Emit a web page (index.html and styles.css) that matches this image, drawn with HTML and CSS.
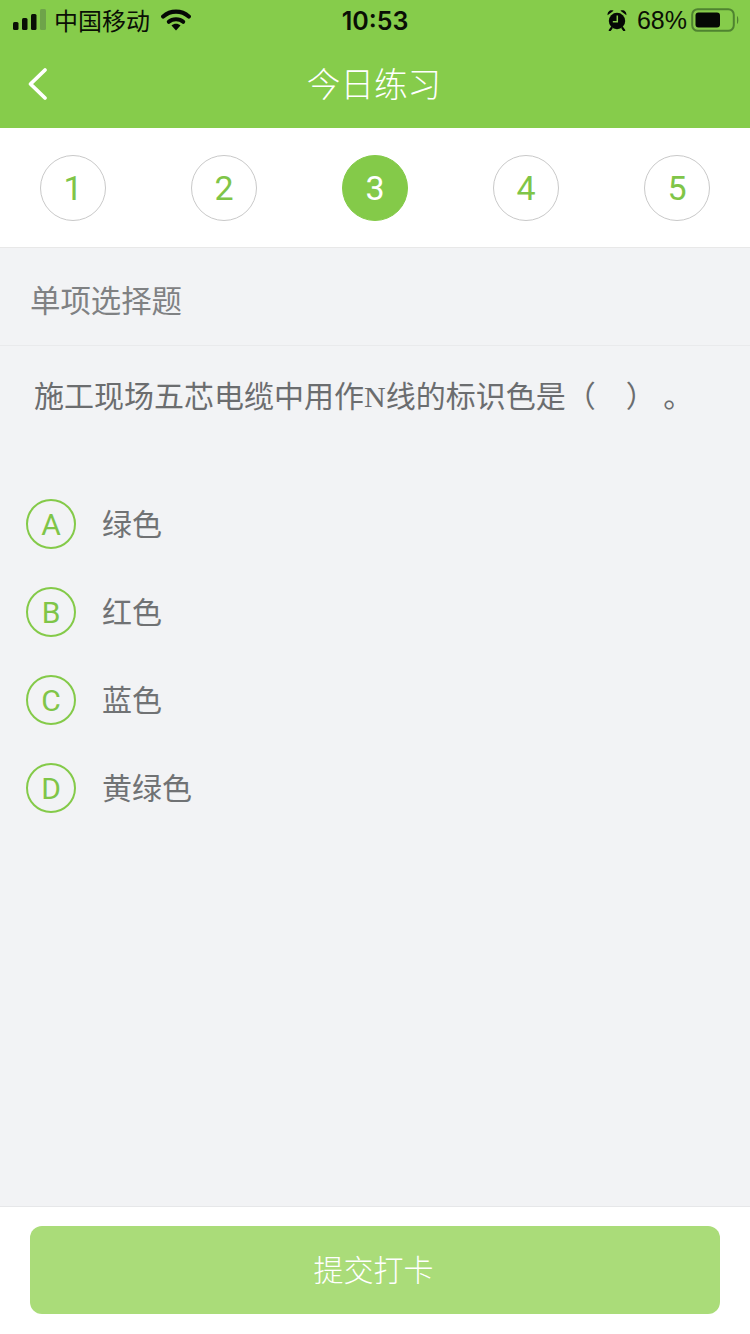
FILE: index.html
```html
<!DOCTYPE html>
<html lang="zh">
<head>
<meta charset="utf-8">
<title>今日练习</title>
<link rel="stylesheet" href="styles.css">
</head>
<body>
<div class="page">
  <header class="head">
    <div class="status">
      <div class="status-side">
        <svg class="signal" width="35" height="22" viewBox="0 0 35 22"><rect x="1" y="13" width="5.500" height="8" rx="1.500" fill="#0a0f05"/><rect x="10" y="9" width="5.500" height="12" rx="1.500" fill="#0a0f05"/><rect x="19" y="5" width="5.500" height="16" rx="1.500" fill="#0a0f05"/><rect x="28" y="0" width="6" height="21" rx="1.500" fill="#6ea34a"/></svg>
        <span class="carrier">中国移动</span>
        <svg class="wifi" width="30" height="22" viewBox="0 0 30 22"><path d="M2.200 7.500C9.500 .9 20.500 .9 27.800 7.500" fill="none" stroke="#050805" stroke-width="4.200" stroke-linecap="round"/><path d="M7.800 12.800C11.500 9.300 18.500 9.300 22.200 12.800" fill="none" stroke="#050805" stroke-width="4" stroke-linecap="round"/><path d="M10.500 16.500C13 14.300 17 14.300 19.500 16.500L15 21.500Z" fill="#050805"/></svg>
      </div>
      <div class="time">10:53</div>
      <div class="status-side status-right">
        <svg class="alarm" width="20" height="22" viewBox="0 0 20 22"><circle cx="10" cy="12" r="8.200" fill="#050805"/><path d="M.6 6.200C.2 2.600 3.600 .2 6.600 1.800ZM19.400 6.200C19.800 2.600 16.400 .2 13.400 1.800Z" fill="#050805"/><path d="M4.500 19 2.800 21.300M15.500 19 17.200 21.300" stroke="#050805" stroke-width="2.200" stroke-linecap="round"/><path d="M10.300 6.500v6.300H5.800" fill="none" stroke="#86cc4b" stroke-width="1.500"/></svg>
        <span class="percent">68%</span>
        <svg class="battery" width="48" height="24" viewBox="0 0 48 24"><rect x="1.200" y="1.200" width="41.600" height="21.600" rx="5.500" fill="none" stroke="#4f8330" stroke-width="2"/><rect x="4.500" y="4.500" width="24.500" height="15" rx="3" fill="#050805"/><path d="M46 8c1.800 .6 1.800 7.400 0 8z" fill="#4f8330"/></svg>
      </div>
    </div>
    <div class="nav">
      <svg class="back" width="24" height="36" viewBox="0 0 24 36"><path d="M19 4 4.500 18 19 32" fill="none" stroke="#fff" stroke-width="3.800" stroke-linecap="round" stroke-linejoin="round"/></svg>
      <h1 class="title">今日练习</h1>
    </div>
  </header>

  <nav class="steps">
    <span class="step">1</span>
    <span class="step">2</span>
    <span class="step step-on">3</span>
    <span class="step">4</span>
    <span class="step">5</span>
  </nav>

  <main class="body">
    <div class="kind">单项选择题</div>
    <p class="question">施工现场五芯电缆中用作N线的标识色是（&emsp;） 。</p>
    <ul class="options">
      <li class="option"><span class="letter">A</span><span class="label">绿色</span></li>
      <li class="option"><span class="letter">B</span><span class="label">红色</span></li>
      <li class="option"><span class="letter">C</span><span class="label">蓝色</span></li>
      <li class="option"><span class="letter">D</span><span class="label">黄绿色</span></li>
    </ul>
  </main>

  <footer class="foot">
    <button class="submit" type="button">提交打卡</button>
  </footer>
</div>
</body>
</html>
```
FILE: styles.css
```css
* { box-sizing: border-box; }
html, body { margin: 0; padding: 0; }
body { font-family: "Noto Sans CJK SC", "Noto Sans", sans-serif; background: #f2f3f5; }
.page { width: 750px; height: 1334px; display: flex; flex-direction: column; overflow: hidden; }

.head { height: 128px; background: #86cc4b; flex: none; }
.status { height: 40px; display: flex; align-items: center; justify-content: space-between; color: #0a0f05; }
.status-side { width: 260px; display: flex; align-items: center; }
.status-right { justify-content: flex-end; }
.signal { margin-left: 12px; }
.carrier { margin-left: 7px; font-size: 24px; line-height: 32px; font-weight: 400; }
.wifi { margin-left: 11px; }
.time { padding-top: 2px; font-family: Inter, "Liberation Sans", sans-serif; font-size: 25px; font-weight: 600; }
.alarm { margin-right: 10px; }
.percent { font-family: "Liberation Sans", sans-serif; font-size: 25px; margin-right: 4px; }
.battery { margin-right: 11px; }

.nav { height: 88px; display: flex; align-items: flex-start; justify-content: center; position: relative; padding: 19px 2px 0 0; }
.back { position: absolute; left: 26px; top: 26px; }
.title { margin: 0; font-size: 33.600px; line-height: 48px; font-weight: 300; color: #fff; }

.steps { height: 120px; flex: none; background: #fff; border-bottom: 1px solid #e8e8e8; padding: 27px 40px 0; display: flex; justify-content: space-between; align-items: flex-start; }
.step { width: 66px; height: 66px; border: 1px solid #c9c9c9; border-radius: 50%; display: flex; align-items: center; justify-content: center; font-family: Roboto, "Liberation Sans", sans-serif; font-size: 34px; color: #7fc548; }
.step-on { background: #84ca49; border-color: #84ca49; color: #fff; }

.body { flex: 1; }
.kind { height: 98px; padding: 4px 30px 0; border-bottom: 1px solid #e9eaec; display: flex; align-items: center; font-size: 30.400px; font-weight: 400; color: #7f8183; }
.question { margin: 0; padding: 29px 0 0 34px; font-family: "Liberation Serif", "Noto Sans CJK SC", serif; font-size: 30px; line-height: 44px; font-weight: 400; color: #6b6d6f; white-space: pre; }
.options { list-style: none; margin: 0; padding: 80px 0 0 26px; display: flex; flex-direction: column; gap: 38px; }
.option { height: 50px; display: flex; align-items: center; }
.letter { width: 50px; height: 50px; border: 2px solid #84ca49; border-radius: 50%; display: flex; align-items: center; justify-content: center; font-family: Roboto, "Liberation Sans", sans-serif; font-size: 30px; color: #7fc548; }
.label { margin-left: 26px; font-size: 30px; line-height: 46px; font-weight: 400; color: #707274; padding-bottom: 4px; }

.foot { height: 128px; flex: none; background: #fff; border-top: 1px solid #e6e7e9; padding: 19px 30px 0; }
.submit { width: 100%; height: 88px; padding: 0 3px 4px 0; border: 0; border-radius: 12px; background: #aadc79; color: #fff; font-family: inherit; font-size: 30px; font-weight: 300; }
```
